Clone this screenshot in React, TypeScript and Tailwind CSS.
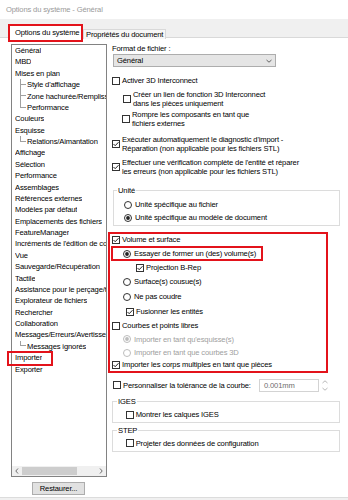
import React from "react";

type TreeItem = { label: string; child?: boolean; last?: boolean; mark?: boolean };

const treeItems: TreeItem[] = [
  { label: "Général" },
  { label: "MBD" },
  { label: "Mises en plan" },
  { label: "Style d'affichage", child: true },
  { label: "Zone hachurée/Remplissage", child: true },
  { label: "Performance", child: true, last: true },
  { label: "Couleurs" },
  { label: "Esquisse" },
  { label: "Relations/Aimantation", child: true, last: true },
  { label: "Affichage" },
  { label: "Sélection" },
  { label: "Performance" },
  { label: "Assemblages" },
  { label: "Références externes" },
  { label: "Modèles par défaut" },
  { label: "Emplacements des fichiers" },
  { label: "FeatureManager" },
  { label: "Incréments de l'édition de cotes" },
  { label: "Vue" },
  { label: "Sauvegarde/Récupération" },
  { label: "Tactile" },
  { label: "Assistance pour le perçage/taraudage" },
  { label: "Explorateur de fichiers" },
  { label: "Rechercher" },
  { label: "Collaboration" },
  { label: "Messages/Erreurs/Avertissements" },
  { label: "Messages ignorés", child: true, last: true },
  { label: "Importer", mark: true },
  { label: "Exporter" },
];

function Box({ on, dim }: { on?: boolean; dim?: boolean }) {
  return (
    <svg width="8" height="8" viewBox="0 0 8 8" className="shrink-0">
      <rect x="0.5" y="0.5" width="7" height="7" fill="#fff" stroke={dim ? "#bcbcbc" : "#333"} />
      {on && <polyline points="1.5,4 3.2,5.7 6.5,2.2" fill="none" stroke="#222" strokeWidth="1" />}
    </svg>
  );
}

function Radio({ on, dim }: { on?: boolean; dim?: boolean }) {
  return (
    <svg width="8" height="8" viewBox="0 0 8 8" className="shrink-0">
      <circle cx="4" cy="4" r="3.5" fill="#fff" stroke={dim ? "#bcbcbc" : "#333"} />
      {on && <circle cx="4" cy="4" r="1.9" fill={dim ? "#bcbcbc" : "#222"} />}
    </svg>
  );
}

function Chevron({ dir, color = "#606060" }: { dir: "left" | "right" | "up" | "down"; color?: string }) {
  const pts = {
    left: "3,0.5 0.8,3 3,5.5",
    right: "1,0.5 3.2,3 1,5.5",
    up: "0.5,3 3,0.8 5.5,3",
    down: "0.5,1 3,3.2 5.5,1",
  }[dir];
  const horiz = dir === "left" || dir === "right";
  return (
    <svg width={horiz ? 4 : 6} height={horiz ? 6 : 4} viewBox={horiz ? "0 0 4 6" : "0 0 6 4"}>
      <polyline points={pts} fill="none" stroke={color} strokeWidth="0.9" />
    </svg>
  );
}

export default function App() {
  return (
    <div className="flex h-[500px] w-[348px] flex-col overflow-hidden bg-white font-['Liberation_Sans',Arial,sans-serif] text-[7.6px] tracking-[-0.15px] text-black">
      {/* title */}
      <div className="flex h-[19px] shrink-0 items-center pl-[6px] text-[#9a9a9a]">Options du système - Général</div>

      {/* tabs */}
      <div className="flex h-[19px] shrink-0 items-start border-b border-[#d9d9d9] bg-[#f0f0f0] pl-[8px] pt-[5px]">
        <div className="relative z-10 flex h-[18px] w-[75px] items-center border-2 border-[#e3131b] bg-white pl-[5px]">
          Options du système
        </div>
        <div className="mt-[5px] flex h-[10px] items-center border border-b-0 border-[#d9d9d9] bg-[#f7f7f7] px-[2px]">
          Propriétés du document
        </div>
      </div>

      {/* body */}
      <div className="flex min-h-0 flex-1">
        {/* left: tree */}
        <div className="flex w-[107px] shrink-0 flex-col">
          <div className="ml-[11px] mt-[6px] flex h-[433px] w-[96px] flex-col border border-[#828282] bg-white">
            {treeItems.map((item, i) => (
              <div key={i} className="relative flex h-[11.38px] shrink-0 items-center pl-[3px]">
                {item.child && (
                  <div className="ml-[5px] flex h-full w-[6px] shrink-0 flex-col">
                    <div className="h-1/2 border-b border-l border-[#a0a0a0]" />
                    <div className={item.last ? "h-1/2" : "h-1/2 border-l border-[#a0a0a0]"} />
                  </div>
                )}
                <span className={item.child ? "ml-[1px] overflow-hidden whitespace-nowrap" : "overflow-hidden whitespace-nowrap"}>
                  {item.label}
                </span>
                {item.mark && (
                  <span className="absolute left-[-5px] top-[-1px] h-[15px] w-[46px] border-2 border-[#e3131b]" />
                )}
              </div>
            ))}
            <div className="flex-1" />
            <div className="flex h-[10px] shrink-0 items-center bg-[#f0f0f0]">
              <div className="flex w-[10px] justify-center">
                <Chevron dir="left" />
              </div>
              <div className="h-[8px] w-[55px] bg-[#cdcdcd]" />
              <div className="flex-1" />
              <div className="flex w-[10px] justify-center">
                <Chevron dir="right" />
              </div>
            </div>
          </div>
          <div className="ml-[32px] mt-[5px] flex h-[13px] w-[53px] items-center justify-center border border-[#adadad] bg-[#e1e1e1]">
            Restaurer...
          </div>
        </div>

        {/* right: options */}
        <div className="flex flex-1 flex-col pl-[5px]">
          <div className="mt-[6px] flex h-[10px] items-center">Format de fichier :</div>
          <div className="ml-[1px] flex h-[13px] w-[163px] items-center justify-between border border-[#adadad] bg-[#e5e5e5] pl-[3px] pr-[3px]">
            <span>Général</span>
            <Chevron dir="down" color="#555" />
          </div>

          <div className="mt-[8.5px] flex h-[10px] items-center gap-[2px]">
            <Box />
            <span>Activer 3D Interconnect</span>
          </div>
          <div className="mt-[4px] flex h-[18px] items-center gap-[2px] pl-[11px] leading-[9px]">
            <Box />
            <span className="whitespace-nowrap">
              Créer un lien de fonction 3D Interconnect
              <br />
              dans les pièces uniquement
            </span>
          </div>
          <div className="mt-[2px] flex h-[18px] items-center gap-[2px] pl-[10px] leading-[9px]">
            <Box />
            <span className="whitespace-nowrap">
              Rompre les composants en tant que
              <br />
              fichiers externes
            </span>
          </div>
          <div className="mt-[7px] flex h-[18px] items-center gap-[2px] leading-[9px]">
            <Box on />
            <span className="whitespace-nowrap">
              Exécuter automatiquement le diagnostic d'import -
              <br />
              Réparation (non applicable pour les fichiers STL)
            </span>
          </div>
          <div className="mt-[5px] flex h-[18px] items-center gap-[2px] leading-[9px]">
            <Box on />
            <span className="whitespace-nowrap">
              Effectuer une vérification complète de l'entité et réparer
              <br />
              les erreurs (non applicable pour les fichiers STL)
            </span>
          </div>

          <fieldset className="ml-[1px] mt-[10px] w-[227px] border border-[#dcdcdc] pb-[2px]">
            <legend className="ml-[3px] px-[1px] leading-[9px]">Unité</legend>
            <div className="mt-[5.5px] flex h-[10px] items-center gap-[3px] pl-[10px]">
              <Radio />
              <span>Unité spécifique au fichier</span>
            </div>
            <div className="mt-[3px] flex h-[10px] items-center gap-[3px] pl-[10px]">
              <Radio on />
              <span>Unité spécifique au modèle de document</span>
            </div>
          </fieldset>

          <div className="ml-[-4px] mt-[6px] w-[220px] border-2 border-[#e3131b] pb-[1px]">
            <div className="mt-[0.5px] flex h-[10px] items-center gap-[2px] pl-[2px]">
              <Box on />
              <span>Volume et surface</span>
            </div>
            <div className="ml-[1px] mt-[1.5px] flex h-[15px] w-[152px] items-center gap-[3px] border-2 border-[#e3131b] pl-[10px]">
              <Radio on />
              <span>Essayer de former un (des) volume(s)</span>
            </div>
            <div className="mt-[1.7px] flex h-[10px] items-center gap-[2px] pl-[26px]">
              <Box on />
              <span>Projection B-Rep</span>
            </div>
            <div className="mt-[4.3px] flex h-[10px] items-center gap-[3px] pl-[13px]">
              <Radio />
              <span>Surface(s) cousue(s)</span>
            </div>
            <div className="mt-[4.7px] flex h-[10px] items-center gap-[3px] pl-[13px]">
              <Radio />
              <span>Ne pas coudre</span>
            </div>
            <div className="mt-[5px] flex h-[10px] items-center gap-[2px] pl-[16px]">
              <Box on />
              <span>Fusionner les entités</span>
            </div>
            <div className="mt-[4px] flex h-[10px] items-center gap-[2px] pl-[2px]">
              <Box />
              <span>Courbes et points libres</span>
            </div>
            <div className="mt-[3.6px] flex h-[10px] items-center gap-[3px] pl-[13px] text-[#a0a0a0]">
              <Radio on dim />
              <span>Importer en tant qu'esquisse(s)</span>
            </div>
            <div className="mt-[3.4px] flex h-[10px] items-center gap-[3px] pl-[13px] text-[#a0a0a0]">
              <Radio dim />
              <span>Importer en tant que courbes 3D</span>
            </div>
            <div className="mt-[2.3px] flex h-[10px] items-center gap-[2px] pl-[2px]">
              <Box on />
              <span>Importer les corps multiples en tant que pièces</span>
            </div>
          </div>

          <div className="mt-[6px] flex h-[13px] w-[216px] items-center pl-[1px]">
            <Box />
            <span className="ml-[2px] flex-1">Personnaliser la tolérance de la courbe:</span>
            <div className="flex h-[13px] w-[60px] items-center border border-[#d3d3d3] pl-[4px] text-[#6d6d6d]">0.001mm</div>
            <div className="ml-[3px] flex w-[6px] flex-col items-center gap-[3px]">
              <Chevron dir="up" color="#b0b0b0" />
              <Chevron dir="down" color="#b0b0b0" />
            </div>
          </div>

          <fieldset className="mt-[5.2px] w-[228px] border border-[#dcdcdc] pb-[1.7px]">
            <legend className="ml-[4px] px-[1px] leading-[9px]">IGES</legend>
            <div className="mt-[3.8px] flex h-[10px] items-center gap-[2px] pl-[12.7px]">
              <Box />
              <span>Montrer les calques IGES</span>
            </div>
          </fieldset>

          <fieldset className="mt-[3.5px] w-[228px] border border-[#dcdcdc] pb-[2.4px]">
            <legend className="ml-[4px] px-[1px] leading-[9px]">STEP</legend>
            <div className="mt-[3.1px] flex h-[10px] items-center gap-[2px] pl-[12.7px]">
              <Box />
              <span>Projeter des données de configuration</span>
            </div>
          </fieldset>
        </div>
      </div>

      <div className="h-[3px] shrink-0 border-t border-[#dcdcdc] bg-[#f0f0f0]" />
    </div>
  );
}
